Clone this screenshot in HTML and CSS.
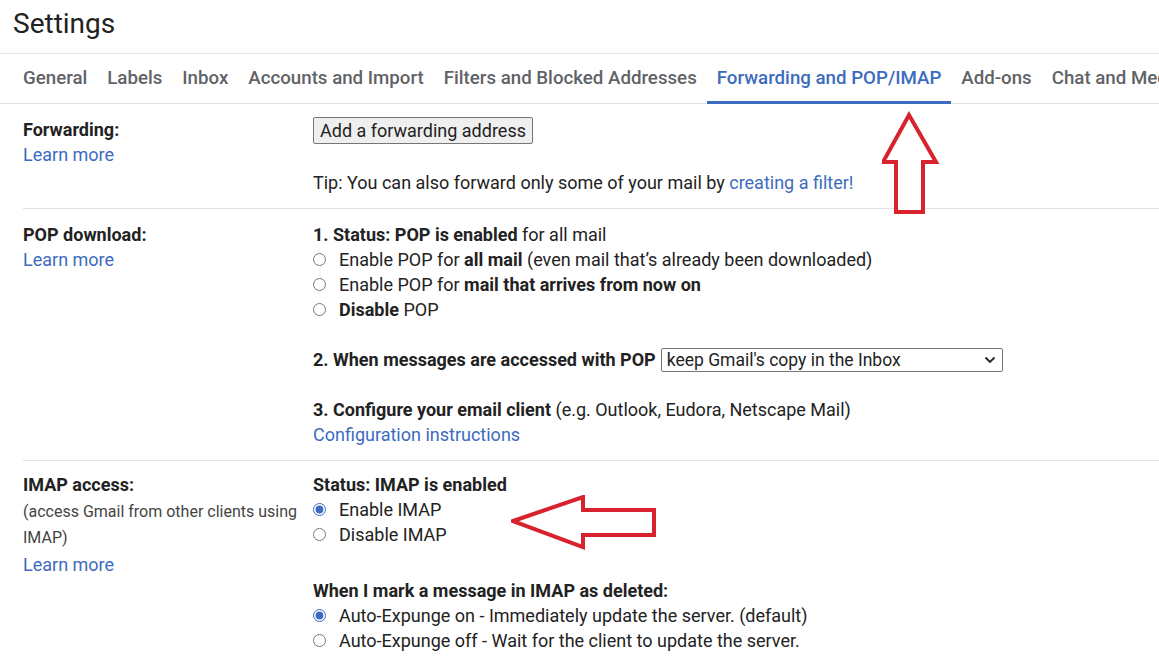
FILE: index.html
```html
<!DOCTYPE html>
<html lang="en">
<head>
<meta charset="utf-8">
<title>Settings</title>
<link rel="stylesheet" href="styles.css">
</head>
<body>
<div class="page">
  <h1 class="title">Settings</h1>
  <nav class="tabs">
    <a class="tab">General</a>
    <a class="tab">Labels</a>
    <a class="tab">Inbox</a>
    <a class="tab">Accounts and Import</a>
    <a class="tab">Filters and Blocked Addresses</a>
    <a class="tab active">Forwarding and POP/IMAP</a>
    <a class="tab">Add-ons</a>
    <a class="tab">Chat and Meet</a>
  </nav>

  <section class="section fwd">
    <div class="label">
      <div class="label-title">Forwarding:</div>
      <a class="link">Learn more</a>
    </div>
    <div class="content">
      <button class="btn">Add a forwarding address</button>
      <div class="tip">Tip: You can also forward only some of your mail by <a class="link">creating a filter!</a></div>
    </div>
  </section>

  <section class="section pop">
    <div class="label">
      <div class="label-title">POP download:</div>
      <a class="link">Learn more</a>
    </div>
    <div class="content">
      <div class="line"><b>1. Status: POP is enabled</b> for all mail</div>
      <label class="radio-row"><input type="radio" name="pop"><span>Enable POP for <b>all mail</b> (even mail that’s already been downloaded)</span></label>
      <label class="radio-row"><input type="radio" name="pop"><span>Enable POP for <b>mail that arrives from now on</b></span></label>
      <label class="radio-row"><input type="radio" name="pop"><span><b>Disable</b> POP</span></label>
      <div class="line spacer"></div>
      <div class="line select-line"><b>2. When messages are accessed with POP</b>
        <span class="select"><span class="select-text">keep Gmail's copy in the Inbox</span>
          <svg class="chev" width="12" height="8" viewBox="0 0 12 8"><path d="M1.5 1.5 L6 6 L10.5 1.5" fill="none" stroke="#222" stroke-width="1.8"/></svg>
        </span>
      </div>
      <div class="line spacer"></div>
      <div class="line"><b>3. Configure your email client</b> (e.g. Outlook, Eudora, Netscape Mail)</div>
      <div class="line"><a class="link">Configuration instructions</a></div>
    </div>
  </section>

  <section class="section imap">
    <div class="label">
      <div class="label-title">IMAP access:</div>
      <div class="label-sub">(access Gmail from other clients using IMAP)</div>
      <a class="link">Learn more</a>
    </div>
    <div class="content">
      <div class="line"><b>Status: IMAP is enabled</b></div>
      <label class="radio-row"><input type="radio" name="imap" checked><span>Enable IMAP</span></label>
      <label class="radio-row"><input type="radio" name="imap"><span>Disable IMAP</span></label>
      <div class="line subhead"><b>When I mark a message in IMAP as deleted:</b></div>
      <label class="radio-row"><input type="radio" name="exp" checked><span>Auto-Expunge on - Immediately update the server. (default)</span></label>
      <label class="radio-row"><input type="radio" name="exp"><span>Auto-Expunge off - Wait for the client to update the server.</span></label>
    </div>
  </section>

  <svg class="arrow arrow-up" width="64" height="110" viewBox="0 0 64 110">
    <path d="M27 4 L54 51 L41 51 L41 101 L14 101 L14 51 L1 51 Z" fill="#fff" stroke="#d8232f" stroke-width="4" stroke-linejoin="miter"/>
  </svg>
  <svg class="arrow arrow-left" width="150" height="60" viewBox="0 0 150 60">
    <path d="M2 26 L72 2 L72 15 L143 15 L143 40 L72 40 L72 52 Z" fill="#fff" stroke="#d8232f" stroke-width="4" stroke-linejoin="miter"/>
  </svg>
</div>
</body>
</html>
```

FILE: styles.css
```css
* { box-sizing: border-box; }

html, body {
  margin: 0;
  padding: 0;
  background: #fff;
}

body {
  font-family: Roboto, "Liberation Sans", Arial, sans-serif;
  color: #222;
  font-size: 18px;
  overflow: hidden;
}

.page {
  position: relative;
  width: 1159px;
  height: 669px;
  overflow: hidden;
}

.title {
  margin: 0;
  height: 53px;
  padding: 6px 13px 0;
  font-size: 28px;
  line-height: 36px;
  font-weight: 400;
  color: #222;
}

.tabs {
  display: flex;
  white-space: nowrap;
  border-top: 1px solid #e6e6e6;
  border-bottom: 1px solid #e3e3e3;
  padding-left: 13px;
  height: 51px;
}

.tab {
  display: block;
  padding: 1px 10px 0;
  height: 50px;
  line-height: 47px;
  font-size: 18.7px;
  font-weight: 500;
  color: #5f6368;
  border-bottom: 3px solid transparent;
  margin-bottom: -1px;
}

.tab.active {
  color: #3c6bc0;
  border-bottom-color: #3c6bc0;
}

.section {
  display: grid;
  grid-template-columns: 290px 1fr;
  margin-left: 23px;
  border-bottom: 1px solid #e2e2e2;
  padding: 13px 0 13px;
  line-height: 25px;
}

.label-title {
  font-weight: 700;
}

.link {
  color: #3c6bc0;
  text-decoration: none;
}

.label .link {
  display: block;
}

.btn {
  display: block;
  height: 27px;
  padding: 0 6px;
  font-family: inherit;
  font-size: 18px;
  color: #222;
  background: #efefef;
  border: 1px solid #767676;
  border-radius: 2px;
  line-height: 25px;
}

.tip {
  margin-top: 26px;
}

.line {
  min-height: 25px;
}

.radio-row {
  display: flex;
  align-items: center;
  gap: 13px;
  height: 25px;
}

.radio-row input {
  margin: 0;
  width: 13px;
  height: 13px;
  accent-color: #3c6bc0;
  flex: none;
}

.select-line {
  display: flex;
  align-items: center;
  gap: 5px;
}

.select {
  display: inline-flex;
  align-items: center;
  justify-content: space-between;
  width: 342px;
  height: 24px;
  padding: 0 6px 0 5px;
  border: 1px solid #767676;
  border-radius: 2px;
  background: #fff;
  font-weight: 400;
  font-size: 17.5px;
  line-height: 22px;
}

.chev {
  display: block;
}

.imap {
  padding-top: 11px;
  border-bottom: none;
}

.label-sub {
  font-size: 16px;
  line-height: 26px;
  color: #444;
  width: 280px;
  margin-top: 2px;
}

.imap .label .link {
  margin-top: 1px;
}

.subhead {
  margin-top: 31px;
}

.arrow {
  position: absolute;
  display: block;
}

.arrow-up {
  left: 882px;
  top: 111px;
}

.arrow-left {
  left: 511px;
  top: 495px;
}
```
